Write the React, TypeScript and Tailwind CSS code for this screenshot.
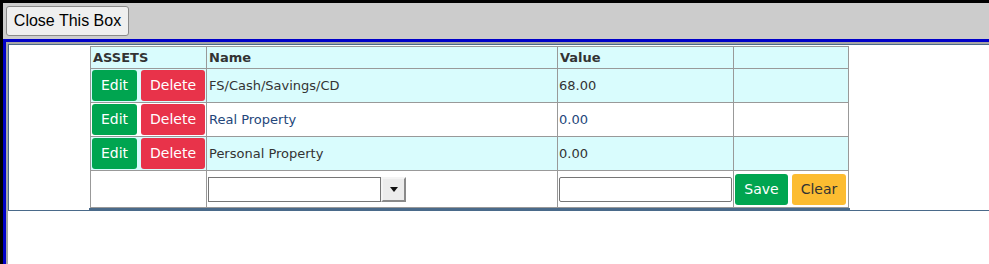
import React from 'react';

// asset rows shown in the table
const ASSETS = [
  { id: 1, name: 'FS/Cash/Savings/CD', value: '68.00', shade: true, link: false },
  { id: 2, name: 'Real Property', value: '0.00', shade: false, link: true },
  { id: 3, name: 'Personal Property', value: '0.00', shade: true, link: false },
];

const cell = 'border border-[#999] px-[2px] align-middle';

export default function App() {
  return (
    <div className="w-[989px] h-[264px] overflow-hidden border-t-[3px] border-l-[3px] border-black bg-white font-['DejaVu_Sans',Verdana,sans-serif]">
      {/* top bar */}
      <div className="bg-[#cccccc] pt-[3px] pl-[3px] pb-[3px]">
        <button className="h-[30px] w-[123px] rounded-[3px] border border-[#8a8a8a] bg-[#efefef] text-[16px] text-black font-['Liberation_Sans',Arial,sans-serif]">
          Close This Box
        </button>
      </div>

      {/* framed panel */}
      <div className="border-t-[3px] border-l-[3px] border-[#0000c8] h-[225px]">
        <div className="border-t-2 border-l-2 border-[#a6a6a6] h-full bg-white">
          <div className="border-t border-l border-b border-[#4a6a8a] pt-px">
            <table className="ml-[81px] border-collapse text-[13px] text-[#333]" style={{ width: 759 }}>
              <colgroup>
                <col className="w-[116px]" />
                <col className="w-[351px]" />
                <col className="w-[176px]" />
                <col className="w-[115px]" />
              </colgroup>
              <thead>
                <tr className="h-[22px] bg-[#d9fcfd] text-left">
                  <th className={`${cell} font-bold`}>ASSETS</th>
                  <th className={`${cell} font-bold`}>Name</th>
                  <th className={`${cell} font-bold`}>Value</th>
                  <th className={cell}></th>
                </tr>
              </thead>
              <tbody>
                {ASSETS.map((a) => (
                  <tr key={a.id} className={`h-[34px] ${a.shade ? 'bg-[#d9fcfd]' : 'bg-white'}`}>
                    <td className={`${cell} !px-px`}>
                      <div className="flex gap-[4px]">
                        <button className="h-[31px] w-[45px] rounded-[3px] bg-[#00a550] text-[14px] text-white">Edit</button>
                        <button className="h-[31px] w-[64px] rounded-[3px] bg-[#e8334a] text-[14px] text-white">Delete</button>
                      </div>
                    </td>
                    <td className={`${cell} ${a.link ? 'text-[#24467a]' : ''}`}>{a.name}</td>
                    <td className={`${cell} !px-px ${a.link ? 'text-[#24467a]' : ''}`}>{a.value}</td>
                    <td className={cell}></td>
                  </tr>
                ))}
                <tr className="h-[37px] bg-white">
                  <td className={cell}></td>
                  <td className={`${cell} !px-px`}>
                    <div className="flex h-[25px] w-[198px] items-stretch">
                      <div className="w-[174px] border border-[#767676] bg-white"></div>
                      <div className="flex w-[25px] items-center justify-center border-2 border-t-[#f4f4f4] border-l-[#f4f4f4] border-r-[#8a8a8a] border-b-[#8a8a8a] bg-[#ececec]">
                        <svg width="8" height="5" viewBox="0 0 8 5">
                          <path d="M0 0 L8 0 L4 5 Z" fill="#111" />
                        </svg>
                      </div>
                    </div>
                  </td>
                  <td className={`${cell} !px-px`}>
                    <div className="h-[25px] w-[173px] rounded-[2px] border border-[#767676] bg-white"></div>
                  </td>
                  <td className={`${cell} !px-px`}>
                    <div className="flex gap-[4px]">
                      <button className="h-[31px] w-[53px] rounded-[3px] bg-[#00a550] text-[14px] text-white">Save</button>
                      <button className="h-[31px] w-[54px] rounded-[3px] bg-[#fcbc31] text-[14px] text-[#333]">Clear</button>
                    </div>
                  </td>
                </tr>
              </tbody>
            </table>
            <div className="ml-[80px] h-[2px] w-[761px] bg-[#4a6a8a]"></div>
          </div>
        </div>
      </div>
    </div>
  );
}
